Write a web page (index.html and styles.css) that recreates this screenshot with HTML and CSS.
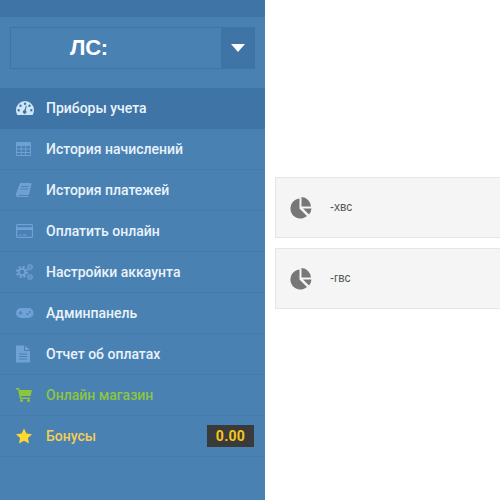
FILE: index.html
```
<!DOCTYPE html>
<html lang="ru">
<head>
<meta charset="utf-8">
<title>ЛС</title>
<link rel="stylesheet" href="styles.css">
</head>
<body>
<div class="page">
  <aside class="sidebar">
    <div class="topbar"></div>
    <div class="account">
      <div class="account-box">
        <div class="account-name">ЛС:</div>
        <div class="account-btn"><span class="caret"></span></div>
      </div>
    </div>
    <nav class="menu">
      <a class="item active"><svg class="ico" viewBox="0 0 18 14"><path fill="#cfe6f7" fill-rule="evenodd" d="M9 0a9 9 0 0 1 9 9c0 2-.6 3.500-1.400 5H1.400C.6 12.500 0 11 0 9a9 9 0 0 1 9-9zM9 1.500a1.200 1.200 0 1 0 0 2.400a1.200 1.200 0 0 0 0-2.400zM4.500 3.500a1.200 1.200 0 1 0 0 2.400a1.200 1.200 0 0 0 0-2.400zM13.500 3.500a1.200 1.200 0 1 0 0 2.400a1.200 1.200 0 0 0 0-2.400zM2.700 8a1.200 1.200 0 1 0 0 2.400a1.200 1.200 0 0 0 0-2.400zM15.300 8a1.200 1.200 0 1 0 0 2.400a1.200 1.200 0 0 0 0-2.400zM10 4.500L8.300 9.200a1.800 1.800 0 1 0 1.500.3l1-5z"/></svg><span>Приборы учета</span></a>
      <a class="item"><svg class="ico" viewBox="0 0 18 14"><path fill="#6fa1d6" fill-rule="evenodd" d="M1 0h13a1 1 0 0 1 1 1v12a1 1 0 0 1-1 1H1a1 1 0 0 1-1-1V1a1 1 0 0 1 1-1zM1 4v2.500h3.800V4zM5.800 4v2.500h3.400V4zM10.200 4v2.500H14V4zM1 7.500V10h3.800V7.500zM5.800 7.500V10h3.400V7.500zM10.200 7.500V10H14V7.500zM1 11v2h3.800v-2zM5.800 11v2h3.400v-2zM10.200 11v2H14v-2z"/></svg><span>История начислений</span></a>
      <a class="item"><svg class="ico" viewBox="0 0 18 14"><path fill="#6fa1d6" fill-rule="evenodd" d="M4 0h10.500a1 1 0 0 1 1 1.200l-2.300 9.600a1.500 1.500 0 0 1-1.500 1.200H2.500a.8.8 0 0 0 0 1h10.300v1H2C.5 14-.3 12.500 0 11zM5 3v1h7.500l.3-1zM4.500 5.500v1h7.500l.3-1z"/></svg><span>История платежей</span></a>
      <a class="item"><svg class="ico" viewBox="0 0 18 14"><path fill="#6fa1d6" fill-rule="evenodd" d="M1.500 0h14A1.500 1.500 0 0 1 17 1.500v11a1.500 1.500 0 0 1-1.500 1.500h-14A1.500 1.500 0 0 1 0 12.500v-11A1.500 1.500 0 0 1 1.500 0zM1.200 1.200v2h14.600v-2zM1.200 6v6.800h14.600V6zM2.500 10.500h3v1h-3zM6.500 10.500h4v1h-4z"/></svg><span>Оплатить онлайн</span></a>
      <a class="item"><svg class="ico" viewBox="0 0 18 16"><g fill="none" stroke="#6fa1d6"><circle cx="6" cy="8" r="5" stroke-width="2.200" stroke-dasharray="2.200 1.730"/><circle cx="6" cy="8" r="3.200" stroke-width="1.800"/><circle cx="14" cy="3" r="2.500" stroke-width="1.200" stroke-dasharray="1 .57"/><circle cx="14" cy="3" r="1.500" stroke-width="1"/><circle cx="14" cy="13" r="2.500" stroke-width="1.200" stroke-dasharray="1 .57"/><circle cx="14" cy="13" r="1.500" stroke-width="1"/></g></svg><span>Настройки аккаунта</span></a>
      <a class="item"><svg class="ico" viewBox="0 0 18 10"><path fill="#6fa1d6" fill-rule="evenodd" d="M5 0h7.500a5 5 0 0 1 0 10H5A5 5 0 0 1 5 0zM4 3v1.500H2.500v1H4V7h1V5.500h1.500v-1H5V3zM11.500 5a1 1 0 1 0 0 2a1 1 0 0 0 0-2zM14 3a1 1 0 1 0 0 2a1 1 0 0 0 0-2z"/></svg><span>Админпанель</span></a>
      <a class="item"><svg class="ico" viewBox="0 0 18 17"><path fill="#6fa1d6" fill-rule="evenodd" d="M0 0h8v5.500h6V17H0zM9 0l5 4.500H9zM3 8v1h8V8zM3 10.500v1h8v-1zM3 13v1h8v-1z"/></svg><span>Отчет об оплатах</span></a>
      <a class="item shop"><svg class="ico" viewBox="0 0 18 14"><path fill="#8cc63f" d="M0 0h3l.5 2H16l-1.500 6H5l.3 1.500H14V11H4L2 1.500H0z"/><circle cx="5.500" cy="12.500" r="1.500" fill="#8cc63f"/><circle cx="12.500" cy="12.500" r="1.500" fill="#8cc63f"/></svg><span>Онлайн магазин</span></a>
      <a class="item bonus"><svg class="ico" viewBox="0 0 18 15"><path fill="#ffd92e" d="M8 0l2.400 5 5.600.7-4.100 3.800 1.100 5.500L8 12.300 3 15l1.100-5.500L0 5.700 5.600 5z"/></svg><span>Бонусы</span><b class="badge">0.00</b></a>
    </nav>
  </aside>
  <main class="content">
    <div class="card"><svg class="pie" viewBox="0 0 22 22"><path fill="#777" d="M9.500 1.500V11.500L17 19A10 10 0 1 1 9.500 1.500z"/><path fill="#777" d="M11.500 0A10 10 0 0 1 21 9.500H11.500z"/><path fill="#777" d="M13 11.500H21.500A10 10 0 0 1 19 17.500z"/></svg><span class="card-label">-хвс</span></div>
    <div class="card"><svg class="pie" viewBox="0 0 22 22"><path fill="#777" d="M9.500 1.500V11.500L17 19A10 10 0 1 1 9.500 1.500z"/><path fill="#777" d="M11.500 0A10 10 0 0 1 21 9.500H11.500z"/><path fill="#777" d="M13 11.500H21.500A10 10 0 0 1 19 17.500z"/></svg><span class="card-label">-гвс</span></div>
  </main>
</div>
</body>
</html>
```
FILE: styles.css
```
* { box-sizing: border-box; }
html, body { margin: 0; height: 100%; overflow: hidden; background: #fff; }
.page { display: flex; height: 500px; font-family: Roboto, "Liberation Sans", sans-serif; }
.sidebar { width: 265px; flex: none; background: #4a81b3; }
.topbar { height: 17px; background: #3f74a6; }
.account { height: 71px; padding: 10px 10px 0 10px; }
.account-box { display: flex; height: 42px; border: 1px solid #3f74a6; border-right: 0; }
.account-name { flex: 1; text-align: center; color: #fff; font-family: "Liberation Sans", sans-serif; font-weight: 700; font-size: 22px; line-height: 40px; padding-right: 54px; letter-spacing: -0.3px; }
.account-btn { width: 34px; margin-top: -1px; margin-bottom: -1px; background: #3f74a6; display: flex; align-items: center; justify-content: center; }
.caret { width: 0; height: 0; border-left: 7px solid transparent; border-right: 7px solid transparent; border-top: 8px solid #fff; }
.menu { display: flex; flex-direction: column; }
.item { display: flex; align-items: center; height: 41px; padding: 0 11px 0 16px; border-bottom: 1px solid #457aae; color: #e8f3fb; font-size: 14px; font-weight: 500; }
.item.active { background: #3f74a6; border-bottom-color: #3f74a6; }
.ico { width: 18px; height: 18px; flex: none; margin-right: 12px; }
.item.shop { color: #8cc63f; }
.item.bonus { color: #f2cf55; }
.item span { flex: 1; }
.badge { background: #3a3a3a; color: #f8c51c; font-size: 14px; font-weight: 700; letter-spacing: 0.3px; width: 47px; height: 22px; line-height: 22px; text-align: center; }
.content { flex: 1; padding-top: 177px; padding-left: 10px; display: flex; flex-direction: column; gap: 10px; }
.card { display: flex; align-items: center; height: 61px; background: #f6f5f5; border: 1px solid #e6e6e6; border-right: 0; padding-left: 14px; color: #555; font-family: "Liberation Sans", sans-serif; font-size: 12px; }
.card-label { margin-top: -2px; }
.pie { width: 22px; height: 22px; margin-right: 18px; flex: none; }
```
